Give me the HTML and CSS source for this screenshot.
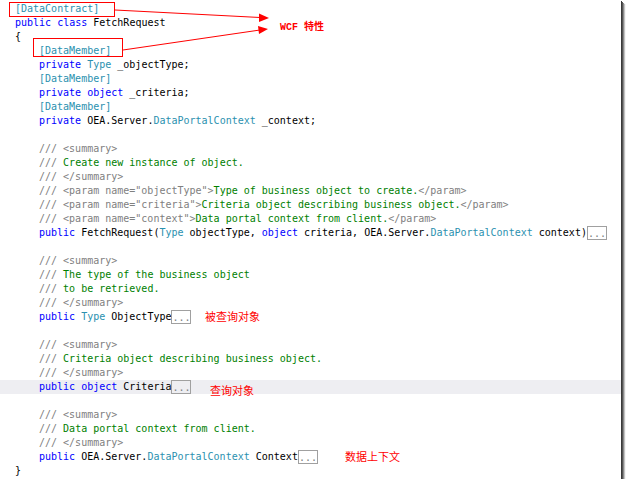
FILE: index.html
```html
<!DOCTYPE html>
<html lang="zh-CN">
<head>
  <meta charset="UTF-8">
  <title>FetchRequest</title>
  <link rel="stylesheet" href="styles.css">
</head>
<body>
  <div class="frame">
    <div class="code">
      <div class="ln"><span class="ty">[DataContract]</span></div>
      <div class="ln"><span class="kw">public class</span> FetchRequest</div>
      <div class="ln">{</div>
      <div class="ln in1"><span class="ty">[DataMember]</span></div>
      <div class="ln in1"><span class="kw">private</span> <span class="ty">Type</span> _objectType;</div>
      <div class="ln in1"><span class="ty">[DataMember]</span></div>
      <div class="ln in1"><span class="kw">private object</span> _criteria;</div>
      <div class="ln in1"><span class="ty">[DataMember]</span></div>
      <div class="ln in1"><span class="kw">private</span> OEA.Server.<span class="ty">DataPortalContext</span> _context;</div>
      <div class="ln"></div>
      <div class="ln in1"><span class="cm">/// &lt;summary&gt;</span></div>
      <div class="ln in1"><span class="cm">///</span> <span class="doc">Create new instance of object.</span></div>
      <div class="ln in1"><span class="cm">/// &lt;/summary&gt;</span></div>
      <div class="ln in1"><span class="cm">/// &lt;param name="objectType"&gt;</span><span class="doc">Type of business object to create.</span><span class="cm">&lt;/param&gt;</span></div>
      <div class="ln in1"><span class="cm">/// &lt;param name="criteria"&gt;</span><span class="doc">Criteria object describing business object.</span><span class="cm">&lt;/param&gt;</span></div>
      <div class="ln in1"><span class="cm">/// &lt;param name="context"&gt;</span><span class="doc">Data portal context from client.</span><span class="cm">&lt;/param&gt;</span></div>
      <div class="ln in1"><span class="kw">public</span> FetchRequest(<span class="ty">Type</span> objectType, <span class="kw">object</span> criteria, OEA.Server.<span class="ty">DataPortalContext</span> context)<span class="fold">...</span></div>
      <div class="ln"></div>
      <div class="ln in1"><span class="cm">/// &lt;summary&gt;</span></div>
      <div class="ln in1"><span class="cm">///</span> <span class="doc">The type of the business object</span></div>
      <div class="ln in1"><span class="cm">///</span> <span class="doc">to be retrieved.</span></div>
      <div class="ln in1"><span class="cm">/// &lt;/summary&gt;</span></div>
      <div class="ln in1"><span class="kw">public</span> <span class="ty">Type</span> ObjectType<span class="fold">...</span></div>
      <div class="ln"></div>
      <div class="ln in1"><span class="cm">/// &lt;summary&gt;</span></div>
      <div class="ln in1"><span class="cm">///</span> <span class="doc">Criteria object describing business object.</span></div>
      <div class="ln in1"><span class="cm">/// &lt;/summary&gt;</span></div>
      <div class="ln in1 current"><span class="kw">public object</span> Criteria<span class="fold">...</span></div>
      <div class="ln"></div>
      <div class="ln in1"><span class="cm">/// &lt;summary&gt;</span></div>
      <div class="ln in1"><span class="cm">///</span> <span class="doc">Data portal context from client.</span></div>
      <div class="ln in1"><span class="cm">/// &lt;/summary&gt;</span></div>
      <div class="ln in1"><span class="kw">public</span> OEA.Server.<span class="ty">DataPortalContext</span> Context<span class="fold">...</span></div>
      <div class="ln">}</div>
    </div>

    <!-- markup drawn over the code -->
    <svg class="marks" width="300" height="60" viewBox="0 0 300 60">
      <rect x="9.5" y="2.5" width="105" height="14" fill="none" stroke="#ff0000" stroke-width="1"/>
      <rect x="33.5" y="38.5" width="89" height="18" fill="none" stroke="#ff0000" stroke-width="1"/>
      <line x1="115" y1="10" x2="260" y2="17.5" stroke="#ff0000" stroke-width="1"/>
      <polygon points="269,18 259,13.5 259,22" fill="#ff0000"/>
      <line x1="123" y1="50" x2="260" y2="30" stroke="#ff0000" stroke-width="1"/>
      <polygon points="268,29 258,26 259,34" fill="#ff0000"/>
    </svg>
    <div class="note note-wcf">WCF 特性</div>
    <div class="note note-type">被查询对象</div>
    <div class="note note-criteria">查询对象</div>
    <div class="note note-context">数据上下文</div>
  </div>
</body>
</html>
```

FILE: styles.css
```css
body {
  margin: 0;
  padding: 0;
  background-color: #ffffff;
}

.frame {
  position: relative;
  width: 621px;
  height: 479px;
  background-color: white;
  box-shadow: 1px 1px 0 #3a3a3a, 2px 2px 0 #555555, 3px 3px 0 #8a8a8a, 4px 4px 1px #c4c4c4;
}

.code {
  padding-top: 2px;
  font-family: "DejaVu Sans Mono", "Liberation Mono", monospace;
  font-size: 10px;
  color: #000000;
}

.ln {
  height: 14px;
  line-height: 14px;
  padding-left: 15px;
  white-space: pre;
}

.ln.in1 {
  padding-left: 39px;
}

.current {
  background-color: #eeeef2;
}

.kw {
  color: #0000ff;
}

.ty {
  color: #2b91af;
}

.cm {
  color: #808080;
}

.doc {
  color: #008000;
}

.fold {
  display: inline-block;
  box-sizing: border-box;
  width: 20px;
  height: 14px;
  line-height: 14px;
  border: 1px solid #a0a0a0;
  color: #808080;
  vertical-align: top;
  overflow: hidden;
}

.marks {
  position: absolute;
  left: 0;
  top: 0;
}

.note {
  position: absolute;
  color: #ff0000;
  font-family: "Noto Sans CJK SC", "Liberation Sans", sans-serif;
  font-size: 11px;
  line-height: 14px;
  white-space: nowrap;
}

.note-wcf {
  left: 280px;
  top: 21px;
  font-family: "Liberation Mono", "Noto Sans CJK SC", monospace;
  font-weight: bold;
  font-size: 10px;
}

.note-type {
  left: 205px;
  top: 309px;
}

.note-criteria {
  left: 210px;
  top: 383px;
}

.note-context {
  left: 345px;
  top: 449px;
}
```
